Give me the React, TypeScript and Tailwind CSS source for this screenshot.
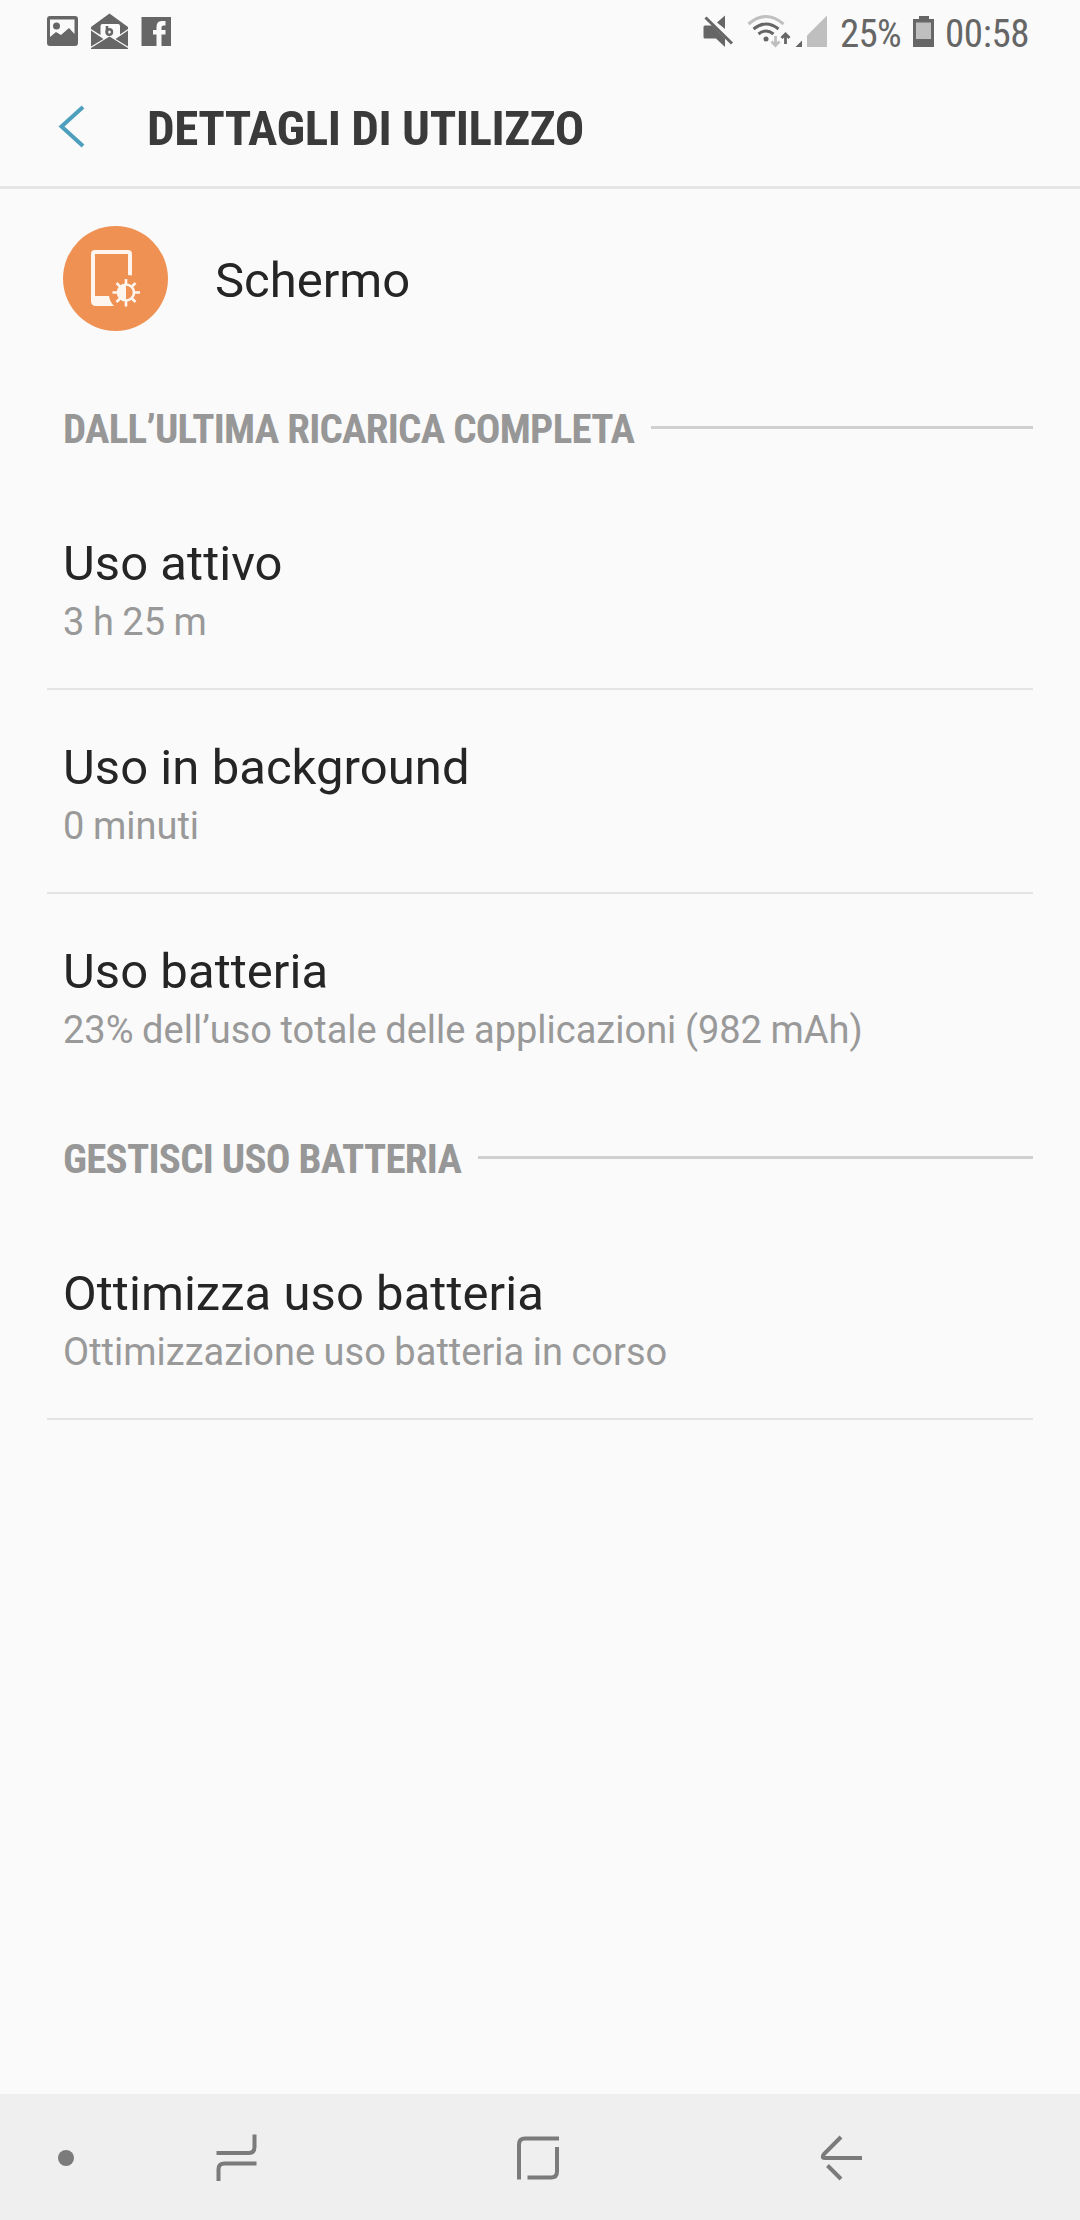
const condensed = "font-['Roboto_Condensed','Roboto',sans-serif] font-stretch-condensed"

interface Usage {
  title: string
  summary: string
}

const sinceCharge: Usage[] = [
  { title: 'Uso attivo', summary: '3 h 25 m' },
  { title: 'Uso in background', summary: '0 minuti' },
  { title: 'Uso batteria', summary: '23% dell’uso totale delle applicazioni (982 mAh)' },
]

function StatusBar() {
  return (
    <div className="flex h-[64px] shrink-0 items-start justify-between pl-[47px] pr-[50px] text-[#666666]">
      <svg width="126" height="64" viewBox="47 0 126 64" fill="currentColor">
        {/* gallery */}
        <path fillRule="evenodd" d="M50 16h25a3 3 0 0 1 3 3v24a3 3 0 0 1-3 3H50a3 3 0 0 1-3-3V19a3 3 0 0 1 3-3zm0 3.500V37l6-5 5 3 8-7 5.500 6V19.500z" />
        <circle cx="56.500" cy="26" r="3.500" />
        {/* mail */}
        <path d="M109.500 13.500 128 27v2l-8 5.500V26q0-2-2-2h-15.500q-2 0-2 2v9L91 29v-2z" />
        <path d="M91 30.500 103.500 39 91 46.500zM128 30.500 115.500 39 128 46.500zM91 49v-1l18.500-11.500L128 48v1z" />
        <path d="M107 26v7" fill="none" stroke="currentColor" strokeWidth="2.600" />
        <circle cx="109.300" cy="32" r="2.700" fill="none" stroke="currentColor" strokeWidth="2.400" />
        {/* facebook */}
        <path fillRule="evenodd" d="M141.500 17H171v29h-9.500V34.500h4v-4.500h-4v-2.500q0-2 2-2h2V21h-4q-5 0-5 6v3h-3.500v4.500h3.500V46h-15z" />
      </svg>

      <div className="flex">
        <svg width="138" height="64" viewBox="700 0 138 64">
          {/* muted */}
          <path d="M717 22.500 725 15.500V29zM705 25.500h7l13 13V47l-9-8.500h-11q-1.500 0-1.500-1.500V27q0-1.500 1.500-1.500z" fill="#666" />
          <path d="M705.500 17.500 732 43.500" stroke="#666" strokeWidth="3" />
          {/* wifi */}
          <g fill="none" strokeWidth="3">
            <path d="M748.500 24q17.500-15 35 0" stroke="#c0c0c0" />
            <path d="M753.500 29q12.500-10 25 0M758.500 34q7.500-6 15 0" stroke="#666" />
          </g>
          <circle cx="766" cy="39" r="2.500" fill="#666" />
          <path d="M775.500 36v9M771.500 41.500l4 4 4-4" fill="none" stroke="#bfbfbf" strokeWidth="2.800" />
          <path d="M785.500 44V34M781.500 38l4-4 4 4" fill="none" stroke="#666" strokeWidth="2.800" />
          <path d="M802 40.500V47h-6.500z" fill="#666" />
          <path d="M827 15.500V47h-20V35.500z" fill="#bfbfbf" />
        </svg>
        <span className={`${condensed} mt-[11px] w-[75px] pl-[2px] text-[39px] leading-[46px] tracking-[-0.7px]`}>25%</span>
        <svg width="32" height="64" viewBox="913 0 32 64">
          <path d="M919 16h10v3h5v28h-21V19h6z" fill="#666" />
          <path d="M916 22.500h15V39h-15z" fill="#bfbfbf" />
        </svg>
        <span className={`${condensed} mt-[11px] w-[85px] whitespace-nowrap text-[39px] leading-[46px] tracking-[-0.4px]`}>00:58</span>
      </div>
    </div>
  )
}

function Header() {
  return (
    <header className="flex h-[125px] shrink-0 items-center border-b-[3px] border-[#e6e6e6] pl-[58px]">
      <svg width="89" height="48" viewBox="58 102 89 48" className="mt-[2px]">
        <path d="M83 107 61.500 126.500 83 146" fill="none" stroke="#4e9fbd" strokeWidth="4" />
      </svg>
      <h1 className={`${condensed} mt-[7px] text-[49px] font-bold leading-[59px] tracking-[-0.45px] text-[#3a3a3a]`}>
        DETTAGLI DI UTILIZZO
      </h1>
    </header>
  )
}

function SectionTitle({ children }: { children: string }) {
  return (
    <div className="flex h-[118px] items-center pl-[63px] pr-[47px]">
      <h2 className={`${condensed} mt-[4px] text-[41px] font-bold leading-[48px] tracking-[-0.75px] text-[#979797]`}>
        {children}
      </h2>
      <div className="ml-[17px] mt-[1px] h-[3px] flex-1 bg-[#d0d0d0]" />
    </div>
  )
}

function UsageRow({ title, summary, last }: Usage & { last?: boolean }) {
  return (
    <div className={`mx-[47px] h-[204px] pl-[16px] pt-[48px] ${last ? '' : 'border-b-2 border-[#e4e4e4]'}`}>
      <p className="text-[49px] leading-[59px] tracking-[0.05px] text-[#252525]">{title}</p>
      <p className="mt-[6px] text-[38px] leading-[46px] text-[#999999] [word-spacing:-0.9px]">{summary}</p>
    </div>
  )
}

function DisplayIcon() {
  return (
    <svg width="105" height="105" viewBox="63 226 105 105">
      <circle cx="115.500" cy="278.500" r="52.500" fill="#ef9153" />
      <path fillRule="evenodd" fill="#fdf5ee" d="M95 250h33q4 0 4 4v21.500l-4-.5V254H95v42h14q1 6 5 10H96q-5 0-5-5v-47q0-4 4-4z" />
      <g stroke="#fdf5ee" strokeWidth="2.600" fill="none">
        <circle cx="126" cy="292.500" r="8" />
        <path d="M126 279v6M126 300v6.500M112.500 292.500h6M133.500 292.500h6.500M116.500 283l4 4M131.500 298l4 4M116.500 302l4-4M131.500 287l4-4" />
      </g>
      <path d="M126 284.500a8 8 0 0 0 0 16z" fill="#fdf5ee" />
    </svg>
  )
}

function NavBar() {
  return (
    <nav className="flex h-[126px] shrink-0 items-center bg-[#efefef] pl-[58px] pt-[2px] text-[#7b7b7b]">
      <div className="h-[16px] w-[16px] rounded-full bg-current" />
      <svg className="ml-[142px]" width="41" height="48" viewBox="216 2134 41 48" fill="none" stroke="currentColor" strokeWidth="4">
        <path d="M216.500 2153h32q6 0 6-6v-12.500M256.500 2163.500h-32q-6 0-6 6V2181" />
      </svg>
      <svg className="ml-[259px]" width="44" height="44" viewBox="516 2136 44 44" fill="none" stroke="currentColor" strokeWidth="4">
        <path d="M559 2138.500h-34q-6 0-6 6V2179.500M527.500 2177.500h23.500q6 0 6-6V2147" />
      </svg>
      <svg className="ml-[260px]" width="44" height="48" viewBox="820 2134 44 48" fill="none" stroke="currentColor" strokeWidth="4">
        <path d="M841 2137l-17 17q-3 4 1 4H862M827.500 2165.500 841 2179" />
      </svg>
    </nav>
  )
}

export default function App() {
  return (
    <div className="flex h-[2220px] w-[1080px] flex-col overflow-hidden bg-[#fafafa] font-['Roboto',sans-serif]">
      <StatusBar />
      <Header />
      <main className="flex-1">
        <div className="flex h-[179px] items-start pl-[63px] pt-[37px]">
          <DisplayIcon />
          <p className="ml-[47px] mt-[25px] text-[49px] leading-[59px] text-[#252525]">Schermo</p>
        </div>
        <SectionTitle>DALL’ULTIMA RICARICA COMPLETA</SectionTitle>
        {sinceCharge.map((row, i) => (
          <UsageRow key={row.title} {...row} last={i === sinceCharge.length - 1} />
        ))}
        <SectionTitle>GESTISCI USO BATTERIA</SectionTitle>
        <UsageRow title="Ottimizza uso batteria" summary="Ottimizzazione uso batteria in corso" />
      </main>
      <NavBar />
    </div>
  )
}
